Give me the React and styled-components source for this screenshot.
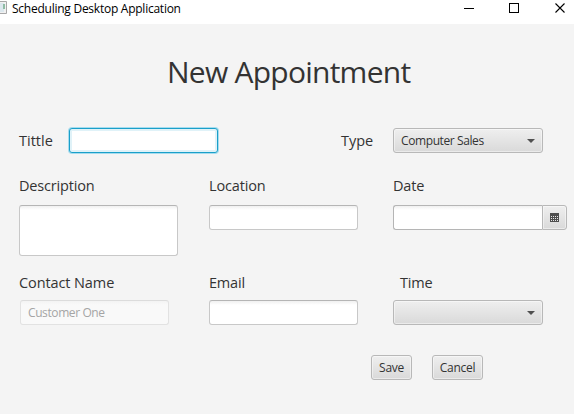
import React from "react";
import styled, { createGlobalStyle, css } from "styled-components";

const GlobalStyle = createGlobalStyle`
  * { box-sizing: border-box; }
  body { margin: 0; overflow: hidden; }
`;

const Window = styled.div`
  width: 574px;
  height: 414px;
  background: #f4f4f4;
  color: #333;
  font-family: "Open Sans", "Noto Sans", sans-serif;
  overflow: hidden;
`;

const TitleBar = styled.header`
  height: 24px;
  display: flex;
  align-items: flex-start;
  background: #fff;
`;

const AppIcon = styled.svg`
  display: block;
  width: 7px;
  height: 16px;
  flex: none;
`;

const WindowTitle = styled.span`
  margin-left: 5px;
  flex: 1;
  font-size: 12px;
  line-height: 18px;
  letter-spacing: ${(p) => p.$spacing}px;
  color: #000;
  white-space: nowrap;
`;

const WindowControls = styled.svg`
  display: block;
  width: 124px;
  height: 24px;
  flex: none;
`;

const Heading = styled.h1`
  margin: 0;
  padding: 23px 0 0 167px;
  height: 104px;
  font-size: 30px;
  font-weight: 400;
  line-height: 50px;
  letter-spacing: ${(p) => p.$spacing}px;
  white-space: nowrap;
`;

const Form = styled.form`
  padding-left: 19px;
`;

const TopRow = styled.div`
  display: grid;
  grid-template-columns: 50px 272px 52px 150px;
  align-items: center;
  height: 25px;
`;

const FieldRow = styled.div`
  display: grid;
  grid-template-columns: 190px 184px 175px;
  align-items: start;
  margin-top: ${(p) => p.$gap}px;
`;

const Field = styled.div`
  display: flex;
  flex-direction: column;
`;

const Label = styled.label`
  height: 20px;
  margin-bottom: ${(p) => p.$gap || 0}px;
  padding-left: ${(p) => p.$indent || 0}px;
  font-size: 14.5px;
  line-height: 20px;
  letter-spacing: ${(p) => p.$spacing || 0}px;
  white-space: nowrap;
`;

const frame = css`
  border: 1px solid;
  border-color: #b5b5b5 #c8c8c8 #c8c8c8;
  border-radius: 3px;
  outline: none;
  font-family: inherit;
`;

const inset = css`
  background: linear-gradient(#f0f0f0, #fff 4px);
`;

const Input = styled.input`
  ${frame}
  ${inset}
  display: block;
  width: 149px;
  height: 25px;
  padding: 0 7px;
  color: #333;
  font-size: 12px;
  letter-spacing: ${(p) => p.$spacing || 0}px;

  ${(p) =>
    p.$focused &&
    css`
      border-color: #1a9fc9;
      background: #fff;
      box-shadow: 0 0 0 1px #a6dcee, inset 0 0 0 2px #e0f2f8;
    `}

  &:disabled {
    margin-left: 1px;
    border-color: #dcdcdc #e2e2e2 #e2e2e2;
    background: linear-gradient(#f3f3f3, #f9f9f9 4px);
    color: #a5a5a5;
  }
`;

const TextArea = styled.textarea`
  ${frame}
  ${inset}
  display: block;
  width: 159px;
  height: 51px;
  resize: none;
`;

const raised = css`
  ${frame}
  border-color: #b8b8b8;
  background: linear-gradient(#efefef, #d9d9d9);
  box-shadow: inset 0 0 0 1px rgba(255, 255, 255, 0.45);
  color: #333;
`;

const Combo = styled.button`
  ${raised}
  display: flex;
  align-items: center;
  justify-content: space-between;
  width: 150px;
  height: 25px;
  padding: 0 7px;
  font-size: 12px;
  line-height: 21px;
  letter-spacing: ${(p) => p.$spacing || 0}px;
`;

const Arrow = styled.svg`
  display: block;
  width: 8px;
  height: 4px;
  margin-left: auto;
`;

const DatePicker = styled.div`
  display: flex;
  width: 174px;
  height: 25px;
`;

const DateInput = styled(Input)`
  border-color: #b5b5b5;
  border-right: 0;
  border-radius: 3px 0 0 3px;
`;

const CalendarButton = styled.button`
  ${raised}
  width: 25px;
  height: 25px;
  padding: 0;
  display: flex;
  align-items: center;
  justify-content: center;
  border-radius: 0 3px 3px 0;
`;

const Actions = styled.div`
  display: flex;
  gap: 20px;
  padding-left: 352px;
  margin-top: 30px;
`;

const Button = styled.button`
  ${raised}
  width: ${(p) => p.$width}px;
  height: 25px;
  padding: 0;
  font-size: 12px;
  line-height: 23px;
  letter-spacing: ${(p) => p.$spacing || 0}px;
  text-align: center;
`;

function DownArrow() {
  return (
    <Arrow viewBox="0 0 8 4">
      <path d="M0 0h8L4 4z" fill="#505050" />
    </Arrow>
  );
}

function CalendarIcon() {
  return (
    <svg width="9" height="9" viewBox="0 0 9 9" shapeRendering="crispEdges">
      <path d="M0 0h9v9H0z" fill="#4e4e4e" />
      <path
        d="M1 3.5h7M1 5.5h7M1 7.5h7"
        stroke="#e6e6e6"
        strokeDasharray="1 1"
      />
    </svg>
  );
}

export default function App() {
  return (
    <Window>
      <GlobalStyle />
      <TitleBar>
        <AppIcon viewBox="0 0 7 16">
          <path d="M-1 1.5h7.5v12H-1" fill="#f1f1f1" stroke="#a8a8a8" />
          <path d="M0 3h4v9H0z" fill="#dce8ee" />
          <path d="M3 4h2v5H3z" fill="#8fbca5" />
        </AppIcon>
        <WindowTitle $spacing={-0.25}>Scheduling Desktop Application</WindowTitle>
        <WindowControls viewBox="0 0 124 24" fill="none" stroke="#000">
          <path d="M14 8.5h10M59.5 3.5h9v9h-9z" shapeRendering="crispEdges" />
          <path d="M105.5 3.5l9 9M114.5 3.5l-9 9" strokeWidth="1.1" />
        </WindowControls>
      </TitleBar>
      <Heading $spacing={-0.75}>New Appointment</Heading>
      <Form>
        <TopRow>
          <Label>Tittle</Label>
          <Input $focused aria-label="Tittle" />
          <Label>Type</Label>
          <Combo type="button" $spacing={-0.4}>
            Computer Sales
            <DownArrow />
          </Combo>
        </TopRow>
        <FieldRow $gap={23}>
          <Field>
            <Label $gap={9} $spacing={-0.18}>Description</Label>
            <TextArea aria-label="Description" />
          </Field>
          <Field>
            <Label $gap={9} $spacing={-0.15}>Location</Label>
            <Input aria-label="Location" />
          </Field>
          <Field>
            <Label $gap={9} $spacing={-0.15}>Date</Label>
            <DatePicker>
              <DateInput aria-label="Date" />
              <CalendarButton type="button" aria-label="Choose date">
                <CalendarIcon />
              </CalendarButton>
            </DatePicker>
          </Field>
        </FieldRow>
        <FieldRow $gap={17}>
          <Field>
            <Label $gap={7} $spacing={-0.1}>Contact Name</Label>
            <Input disabled defaultValue="Customer One" $spacing={-0.4} />
          </Field>
          <Field>
            <Label $gap={7} $spacing={-0.2}>Email</Label>
            <Input aria-label="Email" />
          </Field>
          <Field>
            <Label $gap={7} $indent={7} $spacing={-0.2}>Time</Label>
            <Combo type="button" aria-label="Time">
              <DownArrow />
            </Combo>
          </Field>
        </FieldRow>
        <Actions>
          <Button type="button" $width={41} $spacing={-0.3}>Save</Button>
          <Button type="button" $width={51} $spacing={-0.3}>Cancel</Button>
        </Actions>
      </Form>
    </Window>
  );
}
